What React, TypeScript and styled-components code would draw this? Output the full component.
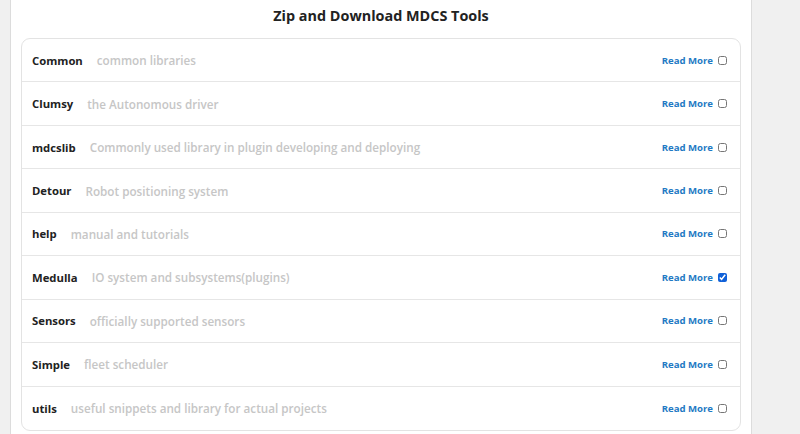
import React, { useState } from "react";
import styled, { createGlobalStyle } from "styled-components";

const Global = createGlobalStyle`
  html, body { margin: 0; padding: 0; background: #f0f0f0; }
  body { font-family: "Open Sans", "Noto Sans", Arial, sans-serif; }
`;

const Page = styled.div`
  display: flex;
  height: 434px;
  overflow: hidden;
  padding-left: 10px;
  box-sizing: border-box;
`;

const Panel = styled.main`
  width: 720px;
  background: #ffffff;
  border-left: 1px solid #dcdcdc;
  border-right: 1px solid #dcdcdc;
  padding: 0 10px;
  box-sizing: content-box;
  display: flex;
  flex-direction: column;
`;

const Title = styled.h1`
  margin: 0;
  height: 38px;
  display: flex;
  align-items: center;
  justify-content: center;
  font-size: 14.4px;
  font-weight: 700;
  color: #222;
  padding-bottom: 8px;
  box-sizing: border-box;
`;

const Card = styled.ul`
  list-style: none;
  margin: 0;
  padding: 0;
  border: 1px solid #e3e3e3;
  border-radius: 9px;
  overflow: hidden;
`;

const Row = styled.li<{ $last?: boolean }>`
  display: flex;
  align-items: center;
  height: 43.45px;
  padding: 0 13px 0 10px;
  border-bottom: ${(p) => (p.$last ? "none" : "1px solid #e6e6e6")};
  box-sizing: border-box;
`;

const Name = styled.span`
  font-size: 11.3px;
  font-weight: 700;
  color: #222;
  margin-right: 14px;
`;

const Desc = styled.span`
  font-size: 11.7px;
  font-weight: 600;
  color: #c6c6c6;
  flex: 1;
`;

const ReadMore = styled.a`
  font-size: 9.6px;
  font-weight: 700;
  color: #1f7ac4;
  text-decoration: none;
  margin-right: 5px;
`;

const Check = styled.input`
  width: 9px;
  height: 9px;
  margin: 0;
  accent-color: #1060d8;
`;

const tools = [
  ["Common", "common libraries"],
  ["Clumsy", "the Autonomous driver"],
  ["mdcslib", "Commonly used library in plugin developing and deploying"],
  ["Detour", "Robot positioning system"],
  ["help", "manual and tutorials"],
  ["Medulla", "IO system and subsystems(plugins)"],
  ["Sensors", "officially supported sensors"],
  ["Simple", "fleet scheduler"],
  ["utils", "useful snippets and library for actual projects"],
];

export default function App() {
  const [checked, setChecked] = useState<Record<string, boolean>>({ Medulla: true });
  return (
    <>
      <Global />
      <Page>
        <Panel>
          <Title>Zip and Download MDCS Tools</Title>
          <Card>
            {tools.map(([name, desc], i) => (
              <Row key={name} $last={i === tools.length - 1}>
                <Name>{name}</Name>
                <Desc>{desc}</Desc>
                <ReadMore href="#">Read More</ReadMore>
                <Check
                  type="checkbox"
                  checked={!!checked[name]}
                  onChange={() => setChecked((c) => ({ ...c, [name]: !c[name] }))}
                />
              </Row>
            ))}
          </Card>
        </Panel>
      </Page>
    </>
  );
}
